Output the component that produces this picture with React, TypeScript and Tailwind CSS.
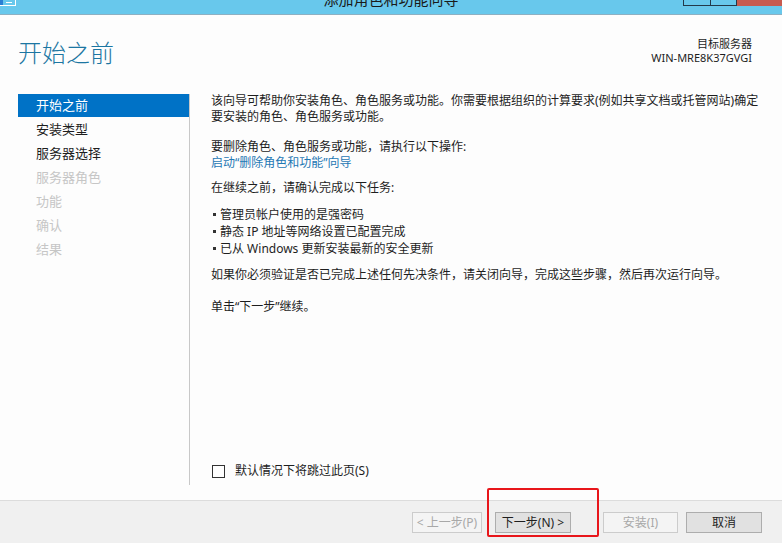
const navItems = [
  { label: "开始之前", state: "active" },
  { label: "安装类型", state: "enabled" },
  { label: "服务器选择", state: "enabled" },
  { label: "服务器角色", state: "disabled" },
  { label: "功能", state: "disabled" },
  { label: "确认", state: "disabled" },
  { label: "结果", state: "disabled" },
];

const tasks = [
  "管理员帐户使用的是强密码",
  "静态 IP 地址等网络设置已配置完成",
  "已从 Windows 更新安装最新的安全更新",
];

function TitleBar() {
  return (
    <div className="grid h-[15px] shrink-0 grid-cols-[99px_1fr_99px] items-start overflow-hidden border-b border-[#8eb0c2] bg-[#68c8ec]">
      <div className="flex h-[6px] w-[16px] border-b border-r border-white">
        <div className="w-[3px] bg-[#2a7fd4]" />
        <div className="flex flex-1 items-center bg-[#68c8ec] px-[3px]">
          <div className="h-px w-full bg-white" />
        </div>
      </div>
      <div className="-mt-[8px] text-center text-[15px] leading-[15px] text-[#1a1a1a]">
        添加角色和功能向导
      </div>
      <div className="flex h-[6px]">
        <div className="w-[28px] border-x border-b border-[#23394a]" />
        <div className="w-[26px] border-r border-b border-[#23394a]" />
        <div className="w-[45px] bg-[#c75b50]" />
      </div>
    </div>
  );
}

function Header() {
  return (
    <div className="flex h-[77px] shrink-0 justify-between px-[18px]">
      <h1 className="pt-[23px] text-[24px] font-light leading-[30px] text-[#1c76a2]">
        开始之前
      </h1>
      <div className="pr-[12px] pt-[22px] text-right text-[11px] leading-[14px] text-[#1e1e1e]">
        <div>目标服务器</div>
        <div>WIN-MRE8K37GVGI</div>
      </div>
    </div>
  );
}

function Nav() {
  return (
    <nav className="ml-[18px] w-[172px] shrink-0 border-r border-[#c8c8c8]">
      {navItems.map((item) => (
        <div
          key={item.label}
          className={
            item.state === "active"
              ? "h-[23px] bg-[#0072c6] pl-[18px] text-[13px] leading-[23px] text-white"
              : item.state === "enabled"
                ? "h-[24px] pl-[18px] text-[13px] leading-[24px] text-[#1e1e1e]"
                : "h-[24px] pl-[18px] text-[13px] leading-[24px] text-[#c6c6c6]"
          }
        >
          {item.label}
        </div>
      ))}
    </nav>
  );
}

function Content() {
  return (
    <div className="flex flex-1 flex-col pl-[21px] pr-[10px] text-[12px] leading-[16px] text-[#1e1e1e]">
      <p className="-mt-[1px]">
        该向导可帮助你安装角色、角色服务或功能。你需要根据组织的计算要求(例如共享文档或托管网站)确定
        <br />
        要安装的角色、角色服务或功能。
      </p>
      <p className="mt-[14px]">要删除角色、角色服务或功能，请执行以下操作:</p>
      <p className="text-[#1f78b4]">启动“删除角色和功能”向导</p>
      <p className="mt-[9px]">在继续之前，请确认完成以下任务:</p>
      <ul className="mt-[10px]">
        {tasks.map((t) => (
          <li key={t} className="flex h-[17px] items-center">
            <span className="ml-[2px] mr-[4px] h-[3px] w-[3px] shrink-0 bg-[#333]" />
            <span>{t}</span>
          </li>
        ))}
      </ul>
      <p className="mt-[10px]">
        如果你必须验证是否已完成上述任何先决条件，请关闭向导，完成这些步骤，然后再次运行向导。
      </p>
      <p className="mt-[16px]">单击“下一步”继续。</p>
      <label className="mb-[6px] mt-auto flex items-center gap-[10px] pl-[1px]">
        <span className="h-[13px] w-[13px] border border-[#333] bg-white" />
        <span>默认情况下将跳过此页(S)</span>
      </label>
    </div>
  );
}

function Footer() {
  const enabled =
    "h-[21px] border border-[#adadad] bg-[#e1e1e1] text-[12px] leading-[19px] text-[#1e1e1e]";
  const disabled =
    "h-[21px] border border-[#cccccc] bg-[#f4f4f4] text-[12px] leading-[19px] text-[#a8a8a8]";
  return (
    <div className="flex h-[43px] shrink-0 justify-end border-t border-[#dcdcdc] bg-[#f0f0f0] pr-[20px] pt-[11px]">
      <button className={`${disabled} w-[70px]`}>&lt; 上一步(P)</button>
      <button className={`${enabled} ml-[13px] w-[76px]`}>下一步(N) &gt;</button>
      <button className={`${disabled} ml-[32px] w-[75px]`}>安装(I)</button>
      <button className={`${enabled} ml-[8px] w-[76px]`}>取消</button>
    </div>
  );
}

export default function App() {
  return (
    <div
      className="relative flex h-[543px] w-[782px] flex-col overflow-hidden bg-[#fdfdfd]"
      style={{ fontFamily: '"Noto Sans", "Noto Sans CJK SC", sans-serif' }}
    >
      <TitleBar />
      <Header />
      <div className="flex flex-1 pb-[15px] pt-[2px]">
        <Nav />
        <Content />
      </div>
      <Footer />
      {/* red highlight drawn over the next button */}
      <div className="pointer-events-none absolute left-[487px] top-[488px] h-[49px] w-[112px] rounded-[2px] border-2 border-[#e8161b]" />
    </div>
  );
}
